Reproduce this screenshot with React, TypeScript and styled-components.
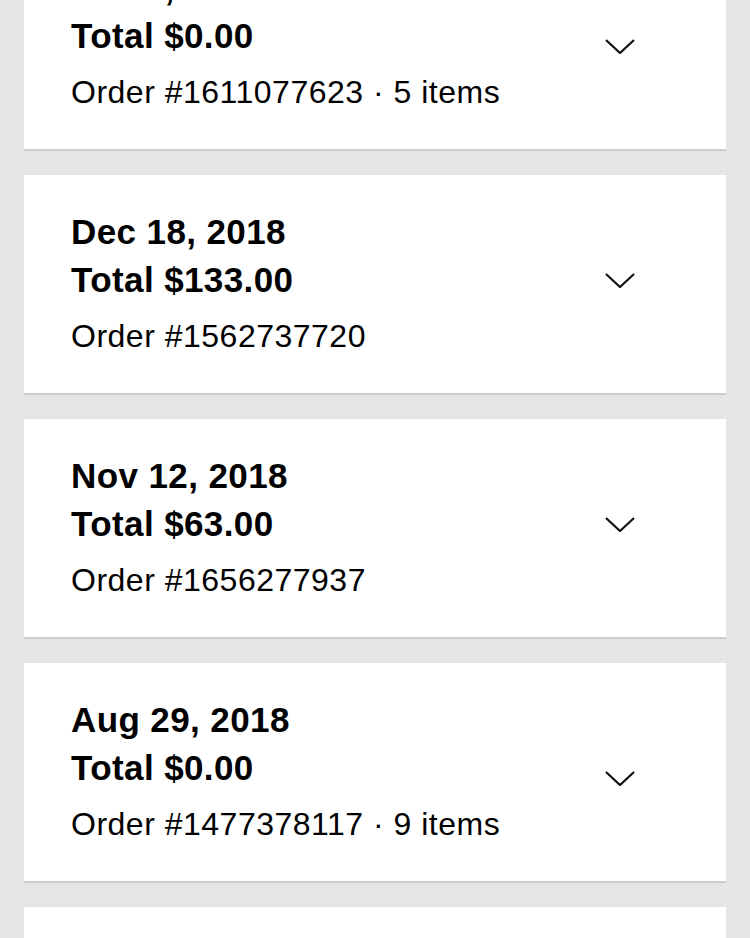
import React from "react";
import styled, { createGlobalStyle } from "styled-components";

const GlobalStyle = createGlobalStyle`
  html, body {
    margin: 0;
    padding: 0;
    background: #e5e5e5;
    overflow: hidden;
  }
  body {
    font-family: "Liberation Sans", Arial, Helvetica, sans-serif;
    color: #000;
  }
`;

const Page = styled.div`
  width: 750px;
  height: 938px;
  overflow: hidden;
  background: #e5e5e5;
`;

const List = styled.div`
  display: flex;
  flex-direction: column;
  gap: 24px;
  padding: 0 24px;
  margin-top: -69px;
`;

const Card = styled.div`
  display: flex;
  flex-direction: row;
  align-items: flex-start;
  justify-content: space-between;
  height: 218px;
  box-sizing: content-box;
  background: #fff;
  border-bottom: 2px solid #cdcdcd;
  padding: 0 91px 0 47px;
  overflow: hidden;
`;

const Info = styled.div`
  display: flex;
  flex-direction: column;
  padding-top: 33px;
`;

const Heading = styled.div`
  font-size: 35px;
  line-height: 48px;
  font-weight: 700;
  letter-spacing: 0.4px;
  white-space: nowrap;
`;

const Meta = styled.div`
  margin-top: 12px;
  font-size: 32px;
  line-height: 40px;
  font-weight: 400;
  letter-spacing: 0.5px;
  white-space: nowrap;
`;

const Toggle = styled.button<{ $low: boolean }>`
  display: flex;
  align-items: center;
  justify-content: center;
  width: 30px;
  height: 15px;
  padding: 0;
  border: none;
  background: none;
  margin-top: ${(p) => (p.$low ? 108 : 98)}px;
  cursor: pointer;
`;

const Chevron = () => (
  <svg width="30" height="15" viewBox="0 0 30 15" fill="none">
    <path d="M1 1 L15 14 L29 1" stroke="#111" strokeWidth="2.2" strokeLinecap="butt" strokeLinejoin="miter" />
  </svg>
);

type Order = { date: string; total: string; id: string; items?: number };

const orders: Order[] = [
  { date: "Mar 5, 2019", total: "$0.00", id: "1611077623", items: 5 },
  { date: "Dec 18, 2018", total: "$133.00", id: "1562737720" },
  { date: "Nov 12, 2018", total: "$63.00", id: "1656277937" },
  { date: "Aug 29, 2018", total: "$0.00", id: "1477378117", items: 9 },
  { date: "Jul 2, 2018", total: "$0.00", id: "1400000000" },
];

export default function App() {
  return (
    <Page>
      <GlobalStyle />
      <List>
        {orders.map((o) => (
          <Card key={o.id}>
            <Info>
              <Heading>{o.date}</Heading>
              <Heading>Total {o.total}</Heading>
              <Meta>
                Order #{o.id}
                {o.items ? ` · ${o.items} items` : ""}
              </Meta>
            </Info>
            <Toggle $low={!!o.items} aria-label="Expand order">
              <Chevron />
            </Toggle>
          </Card>
        ))}
      </List>
    </Page>
  );
}
